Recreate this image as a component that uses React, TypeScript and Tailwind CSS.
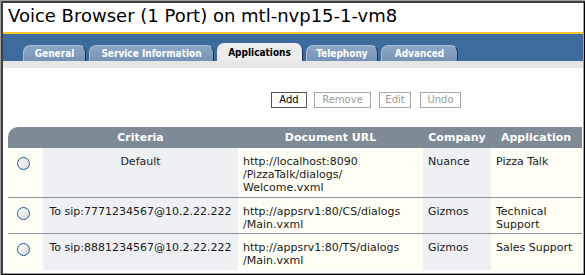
import React from 'react';

const tabs = [
  { label: 'General', w: 'w-[63px]' },
  { label: 'Service Information', w: 'w-[125px]' },
  { label: 'Applications', w: 'w-[86px]', active: true },
  { label: 'Telephony', w: 'w-[72px]' },
  { label: 'Advanced', w: 'w-[77px]' },
];

const rows = [
  {
    criteria: 'Default',
    url: ['http://localhost:8090', '/PizzaTalk/dialogs/', 'Welcome.vxml'],
    company: 'Nuance',
    app: ['Pizza Talk'],
    h: 'h-[49px]',
  },
  {
    criteria: 'To sip:7771234567@10.2.22.222',
    url: ['http://appsrv1:80/CS/dialogs', '/Main.vxml'],
    company: 'Gizmos',
    app: ['Technical', 'Support'],
    h: 'h-[36px]',
  },
  {
    criteria: 'To sip:8881234567@10.2.22.222',
    url: ['http://appsrv1:80/TS/dialogs', '/Main.vxml'],
    company: 'Gizmos',
    app: ['Sales Support'],
    h: 'h-[37px]',
  },
];

function Radio() {
  return (
    <span className="block w-[13px] h-[13px] rounded-full border border-[#1f5a8c] bg-gradient-to-br from-white to-[#d6d9de]" />
  );
}

export default function App() {
  return (
    <div className="w-[585px] h-[275px] overflow-hidden bg-white font-['DejaVu_Sans',Verdana,sans-serif] border-t border-l border-[#a0a0a0]">
      <div className="h-[274px] w-[584px] border-t-2 border-l-2 border-[#404040] border-r border-b border-r-[#000] border-b-[#000]">
        <div className="h-[271px] w-[581px] border-r border-b border-[#a0a0a0] overflow-hidden flex flex-col">
          {/* title */}
          <div className="h-[29px] shrink-0 pl-[5px] text-[18px] leading-[26px] text-black whitespace-nowrap">
            Voice Browser (1 Port) on mtl-nvp15-1-vm8
          </div>
          <div className="h-[2px] shrink-0 bg-[#f5c72c]" />
          {/* tab band */}
          <div className="h-[27px] shrink-0 bg-[#3d6b9e] flex items-end pl-[20px] gap-[3px]">
            {tabs.map((t) =>
              t.active ? (
                <div
                  key={t.label}
                  className={`${t.w} h-[18px] rounded-t-[7px] bg-[#ececec] border-r border-[#1e3552] flex items-center justify-center text-[10px] font-bold text-black [font-stretch:condensed]`}
                >
                  {t.label}
                </div>
              ) : (
                <div
                  key={t.label}
                  className={`${t.w} h-[16px] rounded-t-[7px] bg-gradient-to-b from-[#8ea7c5] to-[#7692b5] border-t border-l border-t-[#a9bdd5] border-l-[#a9bdd5] border-r border-r-[#1e3552] flex items-center justify-center text-[10px] font-bold text-white [font-stretch:condensed]`}
                >
                  {t.label}
                </div>
              )
            )}
          </div>
          <div className="h-[7px] shrink-0 bg-[#e6e6e6]" />

          {/* content */}
          <div className="flex-1 pl-[5px]">
            <div className="flex pl-[263px] mt-[24px] gap-[7px] text-[10px] leading-[14px]">
              <div className="w-[36px] h-[16px] border border-[#555] text-black flex items-center justify-center">Add</div>
              <div className="w-[57px] h-[16px] border border-[#a8a8a8] text-[#9a9a9a] flex items-center justify-center">Remove</div>
              <div className="w-[32px] h-[16px] ml-[1px] border border-[#a8a8a8] text-[#9a9a9a] flex items-center justify-center">Edit</div>
              <div className="w-[41px] h-[16px] ml-[2px] border border-[#a8a8a8] text-[#9a9a9a] flex items-center justify-center">Undo</div>
            </div>

            <div className="mt-[19px] w-[574px] text-[11px] leading-[13px] text-[#1a1a1a]">
              <div className="flex h-[21px] bg-[#7e8a95] rounded-tl-[10px] text-white font-bold items-center">
                <div className="w-[35px]" />
                <div className="w-[195px] text-center">Criteria</div>
                <div className="w-[185px] text-center">Document URL</div>
                <div className="w-[68px] text-center">Company</div>
                <div className="w-[90px] text-center">Application</div>
              </div>
              {rows.map((r, i) => (
                <div key={i} className={`flex ${r.h} ${i > 0 ? 'border-t border-[#8b949c]' : ''}`}>
                  <div className="w-[35px] bg-[#fefef4] pt-[9px] pl-[9px]">
                    <Radio />
                  </div>
                  <div className="w-[195px] bg-[#eef0f3] pt-[7px] text-center whitespace-nowrap">{r.criteria}</div>
                  <div className="w-[185px] bg-[#fefef4] pt-[7px] pl-[5px] whitespace-nowrap">
                    {r.url.map((u) => (
                      <div key={u}>{u}</div>
                    ))}
                  </div>
                  <div className="w-[68px] bg-[#eef0f3] pt-[7px] pl-[5px]">{r.company}</div>
                  <div className="w-[90px] bg-[#fefef4] pt-[7px] pl-[5px] whitespace-nowrap">
                    {r.app.map((a) => (
                      <div key={a}>{a}</div>
                    ))}
                  </div>
                </div>
              ))}
            </div>
          </div>
        </div>
      </div>
    </div>
  );
}
